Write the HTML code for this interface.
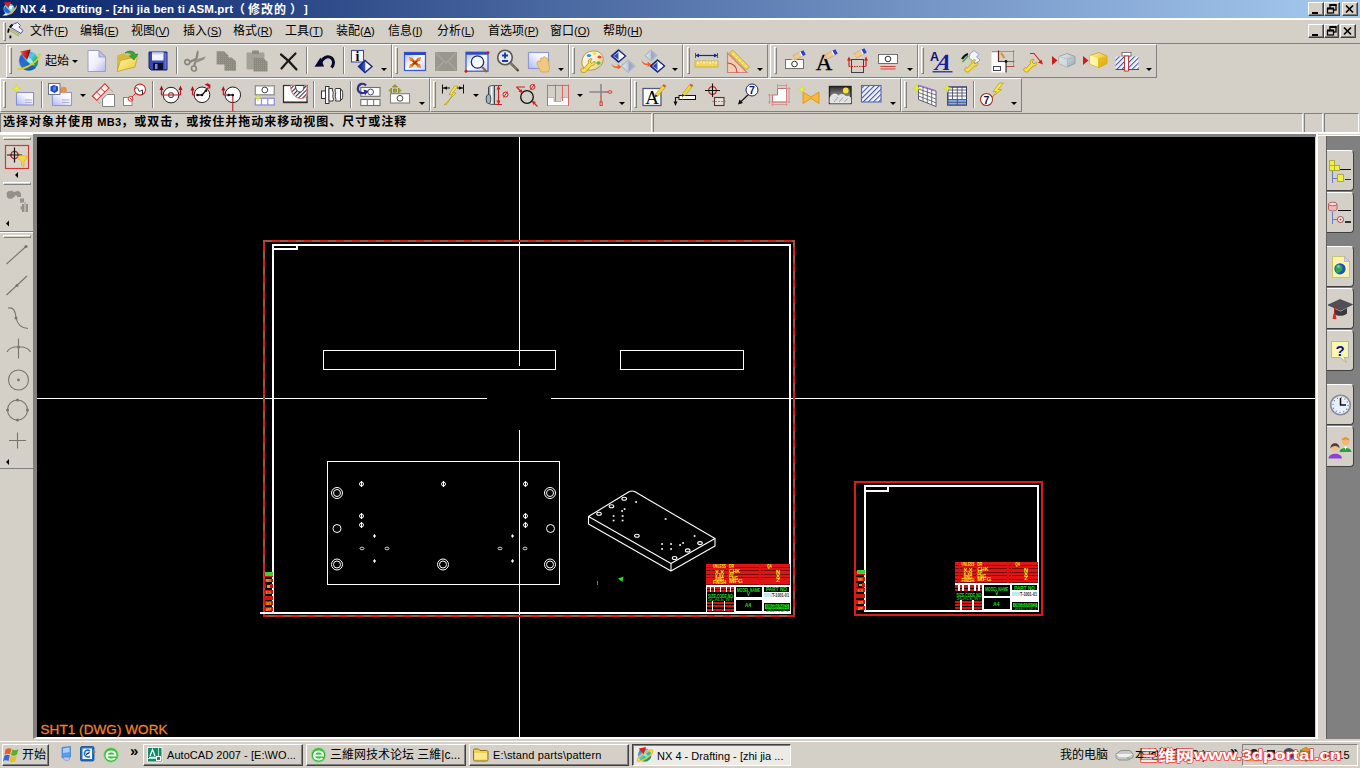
<!DOCTYPE html>
<html lang="zh-CN">
<head>
<meta charset="utf-8">
<title>NX 4 - Drafting - [zhi jia ben ti ASM.prt ( 修改的 ) ]</title>
<style>
*{box-sizing:border-box;margin:0;padding:0}
html,body{width:1360px;height:768px;overflow:hidden;background:#d4d0c8}
body{position:relative;font-family:"Liberation Sans","Noto Sans CJK SC",sans-serif;font-size:12px;color:#000}
.abs{position:absolute}
.t{position:absolute;white-space:nowrap;line-height:1}
svg{position:absolute;overflow:visible}
.tb{position:absolute;border-top:1px solid #fff;border-left:1px solid #fff;border-right:1px solid #808080;border-bottom:1px solid #808080}
.grip{position:absolute;width:3px;border-left:1px solid #fff;border-top:1px solid #fff;border-right:1px solid #808080;border-bottom:1px solid #808080}
.vsep{position:absolute;width:2px;border-left:1px solid #808080;border-right:1px solid #fff}
.dd{position:absolute;width:0;height:0;border-left:3px solid transparent;border-right:3px solid transparent;border-top:3px solid #000}
.wbtn{position:absolute;width:16px;height:14px;background:#d4d0c8;border-top:1px solid #fff;border-left:1px solid #fff;border-right:1px solid #404040;border-bottom:1px solid #404040;box-shadow:inset -1px -1px 0 #808080}
.task{position:absolute;height:22px;top:744px;background:#d4d0c8;border-top:1px solid #fff;border-left:1px solid #fff;border-right:1px solid #404040;border-bottom:1px solid #404040;box-shadow:inset -1px -1px 0 #808080}
</style>
</head>
<body>
<!-- title bar -->
<div class="abs" id="titlebar" style="left:0;top:0;width:1360px;height:18px;background:linear-gradient(90deg,#0a246a 0%,#a6caf0 100%)"></div>
<div class="abs" style="left:0;top:18px;width:1360px;height:2px;background:#fff"></div>
<div id="title" style="font-weight:bold;color:#fff">
<div class="t" id="tt1" style="left:20px;top:4px;font-size:11.500px;letter-spacing:0.160px">NX 4 - Drafting - [zhi jia ben ti ASM.prt</div>
<div class="t" id="tt2" style="left:233px;top:4px;font-size:12px">（</div>
<div class="t" id="tt3" style="left:248px;top:4px;font-size:12px;letter-spacing:1px">修改的</div>
<div class="t" id="tt4" style="left:290px;top:4px;font-size:12px">）</div>
<div class="t" id="tt5" style="left:304px;top:4px;font-size:11px">]</div>
</div>
<!-- window buttons -->
<div class="wbtn" style="left:1308px;top:2px"></div>
<div class="wbtn" style="left:1324px;top:2px"></div>
<div class="wbtn" style="left:1342px;top:2px"></div>
<div class="wbtn" style="left:1308px;top:24px"></div>
<div class="wbtn" style="left:1324px;top:24px;width:15px"></div>
<div class="wbtn" style="left:1340px;top:24px"></div>
<svg style="left:1308px;top:2px" width="50" height="14" viewBox="0 0 50 14">
 <rect x="4" y="10" width="6" height="2" fill="#000"/>
 <rect x="22" y="3" width="6" height="5" fill="none" stroke="#000" stroke-width="1.300"/><rect x="21.500" y="2" width="7" height="2" fill="#000"/>
 <rect x="19.500" y="6.500" width="6" height="4.500" fill="#d4d0c8" stroke="#000" stroke-width="1.300"/><rect x="19" y="5.500" width="7" height="2" fill="#000"/>
 <path d="M38 3.500 L45 10.500 M45 3.500 L38 10.500" stroke="#000" stroke-width="1.700"/>
</svg>
<svg style="left:1308px;top:24px" width="50" height="14" viewBox="0 0 50 14">
 <rect x="4" y="10" width="6" height="2" fill="#000"/>
 <rect x="22" y="3" width="6" height="5" fill="none" stroke="#000" stroke-width="1.300"/><rect x="21.500" y="2" width="7" height="2" fill="#000"/>
 <rect x="19.500" y="6.500" width="6" height="4.500" fill="#d4d0c8" stroke="#000" stroke-width="1.300"/><rect x="19" y="5.500" width="7" height="2" fill="#000"/>
 <path d="M36 3.500 L43 10.500 M43 3.500 L36 10.500" stroke="#000" stroke-width="1.700"/>
</svg>
<!-- menu bar -->
<div class="abs" style="left:0;top:43px;width:1360px;height:1px;background:#808080"></div>
<div class="grip" style="left:3px;top:22px;height:19px"></div>
<div id="menu" style="font-size:12px">
<div class="t" style="left:30px;top:25px">文件<span style="font-size:11px">(<u>F</u>)</span></div>
<div class="t" style="left:80px;top:25px">编辑<span style="font-size:11px">(<u>E</u>)</span></div>
<div class="t" style="left:131px;top:25px">视图<span style="font-size:11px">(<u>V</u>)</span></div>
<div class="t" style="left:183px;top:25px">插入<span style="font-size:11px">(<u>S</u>)</span></div>
<div class="t" style="left:233px;top:25px">格式<span style="font-size:11px">(<u>R</u>)</span></div>
<div class="t" style="left:285px;top:25px">工具<span style="font-size:11px">(<u>T</u>)</span></div>
<div class="t" style="left:336px;top:25px">装配<span style="font-size:11px">(<u>A</u>)</span></div>
<div class="t" style="left:388px;top:25px">信息<span style="font-size:11px">(<u>I</u>)</span></div>
<div class="t" style="left:437px;top:25px">分析<span style="font-size:11px">(<u>L</u>)</span></div>
<div class="t" style="left:488px;top:25px">首选项<span style="font-size:11px">(<u>P</u>)</span></div>
<div class="t" style="left:550px;top:25px">窗口<span style="font-size:11px">(<u>O</u>)</span></div>
<div class="t" style="left:603px;top:25px">帮助<span style="font-size:11px">(<u>H</u>)</span></div>
</div>
<!-- toolbar frames row 1 -->
<div class="tb" style="left:6px;top:44px;width:386px;height:34px"></div>
<div class="tb" style="left:392px;top:44px;width:177px;height:34px"></div>
<div class="tb" style="left:569px;top:44px;width:114px;height:34px"></div>
<div class="tb" style="left:683px;top:44px;width:85px;height:34px"></div>
<div class="tb" style="left:770px;top:44px;width:148px;height:34px"></div>
<div class="tb" style="left:918px;top:44px;width:239px;height:34px"></div>
<!-- toolbar frames row 2 -->
<div class="tb" style="left:0px;top:78px;width:430px;height:34px"></div>
<div class="tb" style="left:430px;top:78px;width:201px;height:34px"></div>
<div class="tb" style="left:631px;top:78px;width:270px;height:34px"></div>
<div class="tb" style="left:901px;top:78px;width:121px;height:34px"></div>
<!-- grips -->
<div class="grip" style="left:9px;top:47px;height:27px"></div>
<div class="grip" style="left:395px;top:47px;height:27px"></div>
<div class="grip" style="left:572px;top:47px;height:27px"></div>
<div class="grip" style="left:687px;top:47px;height:27px"></div>
<div class="grip" style="left:774px;top:47px;height:27px"></div>
<div class="grip" style="left:921px;top:47px;height:27px"></div>
<div class="grip" style="left:3px;top:81px;height:27px"></div>
<div class="grip" style="left:433px;top:81px;height:27px"></div>
<div class="grip" style="left:634px;top:81px;height:27px"></div>
<div class="grip" style="left:904px;top:81px;height:27px"></div>
<!-- separators -->
<div class="vsep" style="left:176px;top:47px;height:27px"></div>
<div class="vsep" style="left:306px;top:47px;height:27px"></div>
<div class="vsep" style="left:343px;top:47px;height:27px"></div>
<div class="vsep" style="left:41px;top:81px;height:27px"></div>
<div class="vsep" style="left:152px;top:81px;height:27px"></div>
<div class="vsep" style="left:313px;top:81px;height:27px"></div>
<div class="vsep" style="left:350px;top:81px;height:27px"></div>
<div class="vsep" style="left:973px;top:81px;height:27px"></div>
<!-- dropdown arrows -->
<div class="dd" style="left:72px;top:60px"></div>
<div class="dd" style="left:381px;top:68px"></div>
<div class="dd" style="left:558px;top:68px"></div>
<div class="dd" style="left:672px;top:68px"></div>
<div class="dd" style="left:757px;top:68px"></div>
<div class="dd" style="left:907px;top:68px"></div>
<div class="dd" style="left:1146px;top:68px"></div>
<div class="dd" style="left:80px;top:94px"></div>
<div class="dd" style="left:419px;top:102px"></div>
<div class="dd" style="left:473px;top:94px"></div>
<div class="dd" style="left:577px;top:94px"></div>
<div class="dd" style="left:619px;top:102px"></div>
<div class="dd" style="left:890px;top:102px"></div>
<div class="dd" style="left:1011px;top:102px"></div>
<div class="t" style="left:45px;top:55px;font-size:12px">起始</div>
<!-- status line -->
<div class="abs" style="left:0;top:113px;width:652px;height:19px;border-top:1px solid #808080;border-left:1px solid #808080;border-right:1px solid #fff"></div>
<div class="abs" style="left:653px;top:113px;width:650px;height:19px;border-top:1px solid #808080;border-left:1px solid #808080;border-right:1px solid #fff"></div>
<div class="abs" style="left:1304px;top:113px;width:19px;height:19px;border-top:1px solid #808080;border-left:1px solid #808080;border-right:1px solid #fff"></div>
<div class="abs" style="left:1324px;top:113px;width:35px;height:19px;border-top:1px solid #808080;border-left:1px solid #808080;border-right:1px solid #fff"></div>
<div class="abs" style="left:0;top:132px;width:1360px;height:2px;background:#fff"></div>
<div class="t" id="statustext" style="left:3px;top:116px;font-size:12px;font-weight:bold;letter-spacing:1px">选择对象并使用<span style="font-size:11px;letter-spacing:0.250px"> MB3</span>，或双击，或按住并拖动来移动视图、尺寸或注释</div>
<!-- canvas -->
<div class="abs" id="canvas" style="left:33px;top:134px;width:1286px;height:605px;background:#000;border-left:4px solid #808080;border-top:3px solid #808080;border-right:4px solid #d4d0c8;border-bottom:2px solid #fff"></div>
<!-- title & menu icons -->
<svg style="left:1px;top:1px" width="18" height="16" viewBox="0 0 18 16">
 <circle cx="8" cy="8" r="5.500" fill="#58d8f0"/><path d="M4 5C6 7 8 10 11 12C8 13.500 4 12 3 9Z" fill="#3060d8"/><path d="M6 5L10 9L12 5Z" fill="#e8ffff"/>
 <path d="M1.500 14.500C6 13.500 13 10 15.500 4C17 6 14 11.500 6 14.500Z" fill="#f0b040"/><path d="M1.500 14.500L5 12L6.500 14Z" fill="#f8f0e0"/>
 <path d="M2.500 1.500L10 1L7.500 7Z" fill="#e01828"/>
</svg>
<svg style="left:7px;top:21px" width="19" height="20" viewBox="0 0 19 20">
 <path d="M6.500 3L10.500 1.500L13.500 4.500L12 6L16 9.500L14 12.500L4 6.500Z" fill="#f4f4ff" stroke="#5058c0" stroke-width="1"/>
 <path d="M2.500 7.500L13 13.500M2 9L12 15" stroke="#a8b860" stroke-width="1.100"/>
 <path d="M5.500 3.500C2 6 0.500 10 1.500 13" fill="none" stroke="#000" stroke-width="1.800" stroke-dasharray="4 1.500"/><rect x="2.500" y="14.500" width="1.800" height="2.800" fill="#000"/>
</svg>
<!-- left sidebar -->
<div class="abs" style="left:0;top:134px;width:33px;height:1px;background:#fff"></div>
<div class="abs" style="left:3px;top:137px;width:28px;height:3px;border-top:1px solid #fff;border-left:1px solid #fff;border-right:1px solid #808080;border-bottom:1px solid #808080"></div>
<div class="abs" style="left:3px;top:182px;width:28px;height:3px;border-top:1px solid #fff;border-left:1px solid #fff;border-right:1px solid #808080;border-bottom:1px solid #808080"></div>
<div class="abs" style="left:0;top:231px;width:33px;height:2px;border-top:1px solid #808080;border-bottom:1px solid #fff"></div>
<div class="abs" style="left:3px;top:235px;width:28px;height:3px;border-top:1px solid #fff;border-left:1px solid #fff;border-right:1px solid #808080;border-bottom:1px solid #808080"></div>
<div class="abs" style="left:0;top:468px;width:33px;height:1px;background:#808080"></div>
<svg id="leftbar" style="left:0;top:134px" width="34" height="340" viewBox="0 134 34 340">
 <!-- selection filter button -->
 <rect x="5.500" y="145.500" width="23" height="23" fill="#d8d4cc" stroke="#d03838" stroke-width="1.200"/>
 <circle cx="14.500" cy="155" r="3.600" fill="none" stroke="#c81818" stroke-width="1.400"/>
 <path d="M14.500 147.500V162.500M7 155H22" stroke="#101010" stroke-width="1.200"/>
 <path d="M17.500 156.500C20 155 25 155 27.500 156.500L24 161.500V166.500L21.500 165.500V161.500Z" fill="#f8d838" stroke="#d8a818" stroke-width="0.600"/>
 <path d="M15 175l3-3v6z" fill="#000"/>
 <!-- binoculars gray -->
 <g fill="#94918a">
  <path d="M6.500 193C8 190.500 12 190 14 192L17 191C19 190.500 21 192 21 194V197H17.500L16 195L13 198C11 199.500 8 199 7 197Z"/>
  <rect x="20" y="198.500" width="4" height="4"/>
  <rect x="22" y="204" width="6" height="8"/><rect x="20.500" y="206.500" width="1.500" height="3"/>
 </g>
 <rect x="24" y="202" width="2" height="10" fill="#b8b5ac"/>
 <path d="M6 223.500l3-3v6z" fill="#000"/>
 <!-- line icons -->
 <g fill="none" stroke="#7c746c" stroke-width="1.100">
  <path d="M6.500 264L26 246.500"/>
  <path d="M6.500 295L27 276"/>
  <path d="M8 308C14 307 15 311 16 317C17 324 21 328 28 328.500"/>
  <path d="M18.500 338.500V358.500M7 352C10 345 27 345 30.500 352"/>
  <circle cx="18.500" cy="380" r="10"/>
  <circle cx="17.500" cy="410" r="10"/>
  <path d="M17.500 432.500V448.500M9 440.500H26"/>
 </g>
 <g fill="#7c746c">
  <circle cx="26" cy="246.500" r="1.600"/><circle cx="17" cy="285.500" r="1.500"/><circle cx="16" cy="318" r="1.500"/><circle cx="18.500" cy="347" r="1.500"/>
  <circle cx="18.500" cy="380" r="1.400"/>
  <circle cx="17.500" cy="400" r="1.500"/><circle cx="17.500" cy="420" r="1.500"/><circle cx="7.500" cy="410" r="1.500"/><circle cx="27.500" cy="410" r="1.500"/>
 </g>
 <path d="M6 462l3-3v6z" fill="#000"/>
</svg>
<!-- right sidebar -->
<div class="abs" style="left:1318px;top:135px;width:42px;height:1px;background:#fff"></div>
<div class="abs" style="left:1326px;top:136px;width:34px;height:603px;background:#808080;border-left:1px solid #606060"></div>
<div class="abs" style="left:1316px;top:134px;width:2px;height:605px;background:#fff"></div>
<!-- taskbar -->
<div class="abs" style="left:0;top:739px;width:1360px;height:29px;background:#d4d0c8"></div>
<div class="abs" style="left:0;top:741px;width:1360px;height:1px;background:#fff"></div>
<!-- right resource bar tabs -->
<div class="abs" style="left:1327px;top:150px;width:27px;height:41px;background:#d4d0c8;border-top:1px solid #fff;border-right:1px solid #404040;border-bottom:1px solid #404040;border-radius:0 4px 4px 0"></div>
<div class="abs" style="left:1327px;top:192px;width:27px;height:41px;background:#d4d0c8;border-top:1px solid #fff;border-right:1px solid #404040;border-bottom:1px solid #404040;border-radius:0 4px 4px 0"></div>
<div class="abs" style="left:1327px;top:246px;width:27px;height:41px;background:#d4d0c8;border-top:1px solid #fff;border-right:1px solid #404040;border-bottom:1px solid #404040;border-radius:0 4px 4px 0"></div>
<div class="abs" style="left:1327px;top:288px;width:27px;height:41px;background:#d4d0c8;border-top:1px solid #fff;border-right:1px solid #404040;border-bottom:1px solid #404040;border-radius:0 4px 4px 0"></div>
<div class="abs" style="left:1327px;top:330px;width:27px;height:41px;background:#d4d0c8;border-top:1px solid #fff;border-right:1px solid #404040;border-bottom:1px solid #404040;border-radius:0 4px 4px 0"></div>
<div class="abs" style="left:1327px;top:384px;width:27px;height:41px;background:#d4d0c8;border-top:1px solid #fff;border-right:1px solid #404040;border-bottom:1px solid #404040;border-radius:0 4px 4px 0"></div>
<div class="abs" style="left:1327px;top:426px;width:27px;height:41px;background:#d4d0c8;border-top:1px solid #fff;border-right:1px solid #404040;border-bottom:1px solid #404040;border-radius:0 4px 4px 0"></div>
<svg id="rtabs" style="left:1320px;top:140px" width="40" height="340" viewBox="1320 140 40 340">
<g shape-rendering="crispEdges"><rect x="1329" y="160" width="5" height="5" fill="#f0f040" stroke="#a0a020" stroke-width="0.800"/><rect x="1329" y="165" width="5" height="5" fill="#f0f040" stroke="#a0a020" stroke-width="0.800"/><rect x="1334" y="165" width="5" height="5" fill="#f0f040" stroke="#a0a020" stroke-width="0.800"/>
<rect x="1339.500" y="168.500" width="11.500" height="1.500" fill="#101010"/>
<rect x="1331.500" y="171" width="1.500" height="12" fill="#7078c0"/><rect x="1333" y="177.500" width="4" height="1.300" fill="#7078c0"/>
<rect x="1337.500" y="174.500" width="6" height="6.500" fill="#f0f040" stroke="#a0a020" stroke-width="0.800"/>
<rect x="1345" y="178.500" width="6" height="1.500" fill="#303030"/></g>
<path d="M1328.500 204V209C1328.500 211.500 1337 211.500 1337 209V204Z" fill="#f0b8b8" stroke="#a05050" stroke-width="0.800"/><ellipse cx="1332.750" cy="204" rx="4.250" ry="1.800" fill="#f8d8d8" stroke="#a05050" stroke-width="0.800"/>
<g shape-rendering="crispEdges"><rect x="1337.500" y="209.500" width="13.500" height="1.500" fill="#101010"/>
<rect x="1331.500" y="212" width="1.500" height="12" fill="#7078c0"/><rect x="1333" y="219" width="4" height="1.300" fill="#7078c0"/>
<rect x="1345" y="221" width="6" height="1.500" fill="#303030"/></g>
<circle cx="1340.500" cy="219.500" r="3" fill="#fff" stroke="#b03030" stroke-width="1"/><circle cx="1340.500" cy="219.500" r="1" fill="#b03030"/>
<path d="M1332.500 256.500H1344.500L1349.500 261.500V277.500H1332.500Z" fill="#f8f4b0" stroke="#c8c068" stroke-width="0.900"/><path d="M1344.500 256.500V261.500H1349.500Z" fill="#d0d0f0" stroke="#a8a8c8" stroke-width="0.700"/>
<circle cx="1340" cy="268.800" r="5.600" fill="#2050c0"/><path d="M1336.500 265C1339 263.500 1342 265 1342.500 267.500C1343 270 1340 272.500 1337.500 273.500C1335 271.500 1335 267 1336.500 265Z" fill="#30a850"/><circle cx="1338.500" cy="266.500" r="1.500" fill="#90d8f0" opacity="0.700"/>
<path d="M1328 305L1340 299.500L1352.500 304.500L1340.500 310.500Z" fill="#505058" stroke="#303038" stroke-width="0.600"/>
<path d="M1334 308.500V314C1337 316.500 1344 316.500 1347 313.500V308L1340.500 311.500Z" fill="#38383e"/>
<path d="M1340 305L1334.500 308V315" fill="none" stroke="#c02020" stroke-width="1"/><path d="M1333.500 313.500L1332.500 319H1336.500L1335.500 313.500Z" fill="#e02828"/>
<path d="M1331.500 341.500H1348.500V357.500H1344L1346.500 362.500L1340 357.500H1331.500Z" fill="#f8f8b0" stroke="#a8b0a0" stroke-width="0.900"/>
<text x="1340" y="355.500" font-family="Liberation Sans,sans-serif" font-weight="bold" font-size="15" text-anchor="middle" fill="#101088">?</text>
<circle cx="1340.500" cy="405" r="9.800" fill="#e8f0fc" stroke="#888c94" stroke-width="1.600"/><circle cx="1340.500" cy="405" r="7.500" fill="none" stroke="#5068a0" stroke-width="1.200" stroke-dasharray="1 2.930"/>
<path d="M1340.500 398V405H1346" fill="none" stroke="#101010" stroke-width="1.500"/>
<path d="M1339.500 452C1339.500 446.500 1351.500 446.500 1351.500 452Z" fill="#28a038"/><path d="M1344 446.500L1345.500 450L1347 446.500Z" fill="#fff"/>
<circle cx="1345.500" cy="441.500" r="3.700" fill="#f0b878"/><path d="M1341.500 441C1341.500 436 1349.500 436 1349.500 441C1348 439 1343 439 1341.500 441Z" fill="#e89028"/>
<path d="M1328.500 458.500C1328.500 452 1342 452 1342 458.500Z" fill="#9040d0"/>
<circle cx="1335" cy="447.500" r="4" fill="#f0c090"/><path d="M1330.500 448.500C1330 441.500 1340 441.500 1339.500 448.500C1338 445 1332 445 1330.500 448.500Z" fill="#504038"/>
</svg>
<!-- drawing canvas -->
<svg id="drawing" style="left:0;top:0" width="1360" height="768" viewBox="0 0 1360 768">
<g shape-rendering="crispEdges" fill="none">
<path d="M519.5 137V366M519.5 430V737M37 398.500H487M551 398.500H1315" stroke="#fff" stroke-width="1"/>
<rect x="264" y="241" width="530" height="375" stroke="#d81c1c" stroke-width="2"/>
<rect x="264" y="241" width="530" height="375" stroke="#a85040" stroke-width="2" stroke-dasharray="8 8"/>
<rect x="273" y="245" width="517" height="368" stroke="#fff" stroke-width="2"/>
<path d="M273 249H297V245" stroke="#fff" stroke-width="2"/>
<rect x="855" y="482" width="187" height="133" stroke="#d81c1c" stroke-width="2"/>
<rect x="865" y="486" width="173" height="125" stroke="#fff" stroke-width="2"/>
<path d="M865 491H888V486" stroke="#fff" stroke-width="2"/>
<path d="M260 612.500H273" stroke="#fff" stroke-width="2"/>
<rect x="323.500" y="350.500" width="232" height="19" stroke="#fff"/>
<rect x="620.500" y="350.500" width="123" height="19" stroke="#fff"/>
<rect x="327.500" y="461.500" width="232" height="123" stroke="#fff"/>
</g>
<g fill="none" stroke="#fff" stroke-width="1">
<circle cx="337" cy="493" r="5.500"/><circle cx="337" cy="493" r="3.500"/>
<circle cx="550" cy="493" r="5.500"/><circle cx="550" cy="493" r="3.500"/>
<circle cx="337" cy="564.5" r="5.500"/><circle cx="337" cy="564.5" r="3.500"/>
<circle cx="443" cy="564.5" r="5.500"/><circle cx="443" cy="564.5" r="3.500"/>
<circle cx="550" cy="564.5" r="5.500"/><circle cx="550" cy="564.5" r="3.500"/>
<circle cx="337" cy="528.5" r="4"/>
<circle cx="550.5" cy="528.5" r="4"/>
<circle cx="361.5" cy="484" r="2"/><path d="M361.5 481V487"/>
<circle cx="443.5" cy="484" r="2"/><path d="M443.5 481V487"/>
<circle cx="525.5" cy="484" r="2"/><path d="M525.5 481V487"/>
<circle cx="361.5" cy="516" r="2"/><path d="M361.5 513V519"/>
<circle cx="361.5" cy="525" r="2"/><path d="M361.5 522V528"/>
<circle cx="525.5" cy="516" r="2"/><path d="M525.5 513V519"/>
<circle cx="525.5" cy="525" r="2"/><path d="M525.5 522V528"/>
</g><g fill="#fff">
<path d="M373.0 536L374.5 534L376.0 536L374.5 538Z"/>
<path d="M373.0 561L374.5 559L376.0 561L374.5 563Z"/>
<path d="M511.0 536L512.5 534L514.0 536L512.5 538Z"/>
<path d="M511.0 561L512.5 559L514.0 561L512.5 563Z"/>
<ellipse cx="362" cy="548.5" rx="2" ry="1.300" fill="none" stroke="#fff" stroke-width="0.800"/>
<ellipse cx="387" cy="548.5" rx="2" ry="1.300" fill="none" stroke="#fff" stroke-width="0.800"/>
<ellipse cx="500" cy="548.5" rx="2" ry="1.300" fill="none" stroke="#fff" stroke-width="0.800"/>
<ellipse cx="525" cy="548.5" rx="2" ry="1.300" fill="none" stroke="#fff" stroke-width="0.800"/>
</g>
<g fill="none" stroke="#fff" stroke-width="1.100" stroke-linejoin="round">
<path d="M588.5 516.5L629 491.8Q632 490.2 635 491.8L715 538.5L671 563.5Z"/>
<path d="M588.5 516.5V524.0L671 571.0L715 546.0V538.5M671 563.5V571.0"/>
<ellipse cx="624.2" cy="498.8" rx="2.300" ry="1.500"/>
<ellipse cx="611.5" cy="506.2" rx="2.300" ry="1.500"/>
<ellipse cx="599" cy="513.8" rx="2.300" ry="1.500"/>
<ellipse cx="636.9" cy="535.8" rx="2.300" ry="1.500"/>
<ellipse cx="700" cy="543.1" rx="2.300" ry="1.500"/>
<ellipse cx="687.7" cy="550.4" rx="2.300" ry="1.500"/>
<ellipse cx="674.6" cy="558" rx="2.300" ry="1.500"/>
</g><g fill="#fff">
<rect x="635.2" y="501.2" width="1.800" height="1.600"/>
<rect x="623.7" y="508.2" width="1.800" height="1.600"/>
<rect x="621.2" y="510.2" width="1.800" height="1.600"/>
<rect x="612.7" y="515.2" width="1.800" height="1.600"/>
<rect x="621.7" y="515.2" width="1.800" height="1.600"/>
<rect x="612.7" y="519.7" width="1.800" height="1.600"/>
<rect x="621.7" y="519.7" width="1.800" height="1.600"/>
<rect x="664.7" y="518.2" width="1.800" height="1.600"/>
<rect x="693.7" y="535.2" width="1.800" height="1.600"/>
<rect x="682.2" y="542.2" width="1.800" height="1.600"/>
<rect x="679.2" y="544.2" width="1.800" height="1.600"/>
<rect x="661.2" y="543.2" width="1.800" height="1.600"/>
<rect x="670.2" y="543.2" width="1.800" height="1.600"/>
<rect x="661.2" y="548.2" width="1.800" height="1.600"/>
<rect x="670.2" y="548.2" width="1.800" height="1.600"/>
</g>
<path d="M618 578.500L623.500 576.500L622.500 582Z" fill="#22e022"/><rect x="597" y="581" width="1" height="4" fill="#22c022"/>
<g shape-rendering="crispEdges">
<rect x="706.0" y="564.0" width="84" height="20.5" fill="#7a0c0c"/>
<rect x="706.0" y="564.3" width="84" height="2.6" fill="#e01414"/>
<rect x="706.0" y="567.7" width="84" height="2.6" fill="#e01414"/>
<rect x="706.0" y="571.1" width="84" height="2.6" fill="#e01414"/>
<rect x="706.0" y="574.5" width="84" height="2.6" fill="#e01414"/>
<rect x="706.0" y="577.9" width="84" height="2.6" fill="#e01414"/>
<rect x="706.0" y="581.3" width="84" height="2.6" fill="#e01414"/>
<rect x="710.5" y="564.0" width="1.5" height="20.5" fill="#e01010"/>
<rect x="727.5" y="564.0" width="1.5" height="20.5" fill="#e01010"/>
<rect x="759.0" y="564.0" width="1.5" height="20.5" fill="#e01010"/>
<rect x="762.5" y="564.0" width="1.5" height="20.5" fill="#e01010"/>
<rect x="706.0" y="584.5" width="84" height="28.0" fill="#fff"/>
<rect x="707.0" y="586.5" width="27.0" height="25.0" fill="#000"/>
<rect x="707.0" y="587.0" width="27.0" height="2.0" fill="#d81010"/>
<rect x="707.0" y="590.0" width="27.0" height="2.0" fill="#d81010"/>
<rect x="707.0" y="602.0" width="27.0" height="2.0" fill="#d81010"/>
<rect x="707.0" y="605.0" width="27.0" height="2.0" fill="#d81010"/>
<rect x="707.0" y="608.5" width="27.0" height="2.0" fill="#d81010"/>
<rect x="710.0" y="587.0" width="1.2" height="5.0" fill="#fff"/>
<rect x="714.0" y="587.0" width="1.2" height="5.0" fill="#fff"/>
<rect x="720.0" y="587.0" width="1.2" height="5.0" fill="#fff"/>
<rect x="726.0" y="587.0" width="1.2" height="5.0" fill="#fff"/>
<rect x="730.0" y="587.0" width="1.2" height="5.0" fill="#fff"/>
<rect x="712.0" y="601.0" width="1.2" height="10.0" fill="#fff"/>
<rect x="724.0" y="601.0" width="1.2" height="10.0" fill="#fff"/>
<rect x="736.0" y="586.5" width="25.5" height="10.5" fill="#000"/>
<rect x="736.0" y="599.5" width="25.5" height="11.0" fill="#000"/>
<rect x="764.0" y="587.0" width="25.0" height="4.5" fill="#000"/>
<rect x="763.5" y="593.0" width="8.0" height="4.0" fill="#bfe8ff"/>
<rect x="763.5" y="603.0" width="26.0" height="8.0" fill="#000"/>
<rect x="765.0" y="604.0" width="24.0" height="4.5" fill="#18d818"/>
</g>
<g font-family="Liberation Sans,sans-serif" font-weight="bold" fill="#ffe820" font-size="5.5">
<text x="713.0" y="568.0" textLength="13.0" lengthAdjust="spacingAndGlyphs">UNLESS</text>
<text x="715.0" y="573.5" textLength="9.0" lengthAdjust="spacingAndGlyphs">X.X</text>
<text x="715.0" y="577.5" textLength="9.0" lengthAdjust="spacingAndGlyphs">X.XX</text>
<text x="715.0" y="581.0" textLength="9.0" lengthAdjust="spacingAndGlyphs">ANG</text>
<text x="713.0" y="584.0" textLength="13.0" lengthAdjust="spacingAndGlyphs">FINISH</text>
<text x="729.0" y="568.0" textLength="5.0" lengthAdjust="spacingAndGlyphs">DR</text>
<text x="729.0" y="572.5" textLength="11.0" lengthAdjust="spacingAndGlyphs">CHK</text>
<text x="729.0" y="576.0" textLength="5.0" lengthAdjust="spacingAndGlyphs">AP</text>
<text x="729.0" y="579.5" textLength="9.0" lengthAdjust="spacingAndGlyphs">ENG</text>
<text x="729.0" y="583.0" textLength="14.0" lengthAdjust="spacingAndGlyphs">MFG</text>
<text x="767.0" y="568.0" textLength="5.0" lengthAdjust="spacingAndGlyphs">QA</text>
<text x="776.0" y="574.0" textLength="4.0" lengthAdjust="spacingAndGlyphs">N</text>
<text x="776.0" y="578.0" textLength="4.0" lengthAdjust="spacingAndGlyphs">X</text>
<text x="776.0" y="582.0" textLength="4.0" lengthAdjust="spacingAndGlyphs">Z</text>
</g>
<g font-family="Liberation Sans,sans-serif" font-weight="bold" fill="#20e020" font-size="5.5">
<text x="737.0" y="592.0" textLength="23.0" lengthAdjust="spacingAndGlyphs">MODEL NAME</text>
<text x="747.0" y="596.0" textLength="3.0" lengthAdjust="spacingAndGlyphs">V</text>
<text x="745.0" y="607.0" textLength="6.0" lengthAdjust="spacingAndGlyphs">A4</text>
<text x="766.0" y="591.0" textLength="21.0" lengthAdjust="spacingAndGlyphs">PART NO</text>
<text x="708.0" y="598.0" textLength="25.0" lengthAdjust="spacingAndGlyphs">SIZE CODE NO</text>
<text x="708.0" y="601.0" textLength="25.0" lengthAdjust="spacingAndGlyphs" fill="#10a010">SCALE WT</text>
<text x="766.0" y="608.0" textLength="22.0" lengthAdjust="spacingAndGlyphs" fill="#063806">UNIGRAPHICS</text>
<text x="766.0" y="611.5" textLength="22.0" lengthAdjust="spacingAndGlyphs" fill="#10a010">SHEET 1 OF 1</text>
<text x="772.0" y="597.0" textLength="17.0" lengthAdjust="spacingAndGlyphs" fill="#222">T-1001-01</text>
</g>
<g shape-rendering="crispEdges">
<rect x="954.5" y="562.0" width="83.5" height="20.92" fill="#7a0c0c"/>
<rect x="954.5" y="562.31" width="83.5" height="2.65" fill="#e01414"/>
<rect x="954.5" y="565.78" width="83.5" height="2.65" fill="#e01414"/>
<rect x="954.5" y="569.25" width="83.5" height="2.65" fill="#e01414"/>
<rect x="954.5" y="572.72" width="83.5" height="2.65" fill="#e01414"/>
<rect x="954.5" y="576.19" width="83.5" height="2.65" fill="#e01414"/>
<rect x="954.5" y="579.66" width="83.5" height="2.65" fill="#e01414"/>
<rect x="958.97" y="562.0" width="1.49" height="20.92" fill="#e01010"/>
<rect x="975.87" y="562.0" width="1.49" height="20.92" fill="#e01010"/>
<rect x="1007.18" y="562.0" width="1.49" height="20.92" fill="#e01010"/>
<rect x="1010.66" y="562.0" width="1.49" height="20.92" fill="#e01010"/>
<rect x="954.5" y="582.92" width="83.5" height="28.58" fill="#fff"/>
<rect x="955.49" y="584.96" width="26.84" height="25.52" fill="#000"/>
<rect x="955.49" y="585.47" width="26.84" height="2.04" fill="#d81010"/>
<rect x="955.49" y="588.54" width="26.84" height="2.04" fill="#d81010"/>
<rect x="955.49" y="600.78" width="26.84" height="2.04" fill="#d81010"/>
<rect x="955.49" y="603.85" width="26.84" height="2.04" fill="#d81010"/>
<rect x="955.49" y="607.42" width="26.84" height="2.04" fill="#d81010"/>
<rect x="958.48" y="585.47" width="1.19" height="5.1" fill="#fff"/>
<rect x="962.45" y="585.47" width="1.19" height="5.1" fill="#fff"/>
<rect x="968.42" y="585.47" width="1.19" height="5.1" fill="#fff"/>
<rect x="974.38" y="585.47" width="1.19" height="5.1" fill="#fff"/>
<rect x="978.36" y="585.47" width="1.19" height="5.1" fill="#fff"/>
<rect x="960.46" y="599.76" width="1.19" height="10.21" fill="#fff"/>
<rect x="972.39" y="599.76" width="1.19" height="10.21" fill="#fff"/>
<rect x="984.32" y="584.96" width="25.35" height="10.72" fill="#000"/>
<rect x="984.32" y="598.23" width="25.35" height="11.23" fill="#000"/>
<rect x="1012.15" y="585.47" width="24.85" height="4.59" fill="#000"/>
<rect x="1011.66" y="591.6" width="7.95" height="4.08" fill="#bfe8ff"/>
<rect x="1011.66" y="601.8" width="25.85" height="8.16" fill="#000"/>
<rect x="1013.15" y="602.82" width="23.86" height="4.59" fill="#18d818"/>
</g>
<g font-family="Liberation Sans,sans-serif" font-weight="bold" fill="#ffe820" font-size="5.61">
<text x="961.46" y="566.08" textLength="12.92" lengthAdjust="spacingAndGlyphs">UNLESS</text>
<text x="963.45" y="571.7" textLength="8.95" lengthAdjust="spacingAndGlyphs">X.X</text>
<text x="963.45" y="575.78" textLength="8.95" lengthAdjust="spacingAndGlyphs">X.XX</text>
<text x="963.45" y="579.35" textLength="8.95" lengthAdjust="spacingAndGlyphs">ANG</text>
<text x="961.46" y="582.41" textLength="12.92" lengthAdjust="spacingAndGlyphs">FINISH</text>
<text x="977.36" y="566.08" textLength="4.97" lengthAdjust="spacingAndGlyphs">DR</text>
<text x="977.36" y="570.68" textLength="10.93" lengthAdjust="spacingAndGlyphs">CHK</text>
<text x="977.36" y="574.25" textLength="4.97" lengthAdjust="spacingAndGlyphs">AP</text>
<text x="977.36" y="577.82" textLength="8.95" lengthAdjust="spacingAndGlyphs">ENG</text>
<text x="977.36" y="581.39" textLength="13.92" lengthAdjust="spacingAndGlyphs">MFG</text>
<text x="1015.14" y="566.08" textLength="4.97" lengthAdjust="spacingAndGlyphs">QA</text>
<text x="1024.08" y="572.21" textLength="3.98" lengthAdjust="spacingAndGlyphs">N</text>
<text x="1024.08" y="576.29" textLength="3.98" lengthAdjust="spacingAndGlyphs">X</text>
<text x="1024.08" y="580.37" textLength="3.98" lengthAdjust="spacingAndGlyphs">Z</text>
</g>
<g font-family="Liberation Sans,sans-serif" font-weight="bold" fill="#20e020" font-size="5.61">
<text x="985.32" y="590.58" textLength="22.86" lengthAdjust="spacingAndGlyphs">MODEL NAME</text>
<text x="995.26" y="594.66" textLength="2.98" lengthAdjust="spacingAndGlyphs">V</text>
<text x="993.27" y="605.89" textLength="5.96" lengthAdjust="spacingAndGlyphs">A4</text>
<text x="1014.14" y="589.56" textLength="20.88" lengthAdjust="spacingAndGlyphs">PART NO</text>
<text x="956.49" y="596.7" textLength="24.85" lengthAdjust="spacingAndGlyphs">SIZE CODE NO</text>
<text x="956.49" y="599.76" textLength="24.85" lengthAdjust="spacingAndGlyphs" fill="#10a010">SCALE WT</text>
<text x="1014.14" y="606.91" textLength="21.87" lengthAdjust="spacingAndGlyphs" fill="#063806">UNIGRAPHICS</text>
<text x="1014.14" y="610.48" textLength="21.87" lengthAdjust="spacingAndGlyphs" fill="#10a010">SHEET 1 OF 1</text>
<text x="1020.11" y="595.68" textLength="16.9" lengthAdjust="spacingAndGlyphs" fill="#222">T-1001-01</text>
</g>
<g shape-rendering="crispEdges">
<rect x="264" y="572.8" width="9" height="3.91" fill="#d81010"/>
<rect x="264" y="578.51" width="9" height="3.91" fill="#d81010"/>
<rect x="264" y="584.2299999999999" width="9" height="3.91" fill="#d81010"/>
<rect x="264" y="589.9399999999999" width="9" height="3.91" fill="#d81010"/>
<rect x="264" y="595.66" width="9" height="3.91" fill="#d81010"/>
<rect x="264" y="601.37" width="9" height="3.91" fill="#d81010"/>
<rect x="264" y="607.0899999999999" width="9" height="3.91" fill="#d81010"/>
<rect x="265" y="572" width="8" height="3.71" fill="#40d030"/>
<rect x="266" y="584.43" width="4" height="3.71" fill="#101000"/>
<rect x="267" y="585.43" width="3" height="2.21" fill="#c0b020"/>
</g>
<g font-family="Liberation Sans,sans-serif" font-weight="bold" fill="#ffd020" font-size="4.11">
<text x="266" y="582.4" textLength="5" lengthAdjust="spacingAndGlyphs">REV</text>
<text x="266" y="593.83" textLength="5" lengthAdjust="spacingAndGlyphs" fill="#40e030">ECN</text>
<text x="266" y="605.26" textLength="5" lengthAdjust="spacingAndGlyphs">DATE</text>
<text x="266" y="610.97" textLength="5" lengthAdjust="spacingAndGlyphs">APP</text>
</g>
<g shape-rendering="crispEdges">
<rect x="856" y="570.8" width="9" height="4.06" fill="#d81010"/>
<rect x="856" y="576.66" width="9" height="4.06" fill="#d81010"/>
<rect x="856" y="582.51" width="9" height="4.06" fill="#d81010"/>
<rect x="856" y="588.37" width="9" height="4.06" fill="#d81010"/>
<rect x="856" y="594.2299999999999" width="9" height="4.06" fill="#d81010"/>
<rect x="856" y="600.0899999999999" width="9" height="4.06" fill="#d81010"/>
<rect x="856" y="605.9399999999999" width="9" height="4.06" fill="#d81010"/>
<rect x="857" y="570" width="8" height="3.86" fill="#40d030"/>
<rect x="858" y="582.71" width="4" height="3.86" fill="#101000"/>
<rect x="859" y="583.71" width="3" height="2.36" fill="#c0b020"/>
</g>
<g font-family="Liberation Sans,sans-serif" font-weight="bold" fill="#ffd020" font-size="4.22">
<text x="858" y="580.66" textLength="5" lengthAdjust="spacingAndGlyphs">REV</text>
<text x="858" y="592.37" textLength="5" lengthAdjust="spacingAndGlyphs" fill="#40e030">ECN</text>
<text x="858" y="604.09" textLength="5" lengthAdjust="spacingAndGlyphs">DATE</text>
<text x="858" y="609.95" textLength="5" lengthAdjust="spacingAndGlyphs">APP</text>
</g>
<text x="40.500" y="734" font-family="Liberation Sans,sans-serif" font-size="13.500" fill="#f08030" stroke="#f08030" stroke-width="0.300" id="sht" textLength="127" lengthAdjust="spacing">SHT1 (DWG) WORK</text>
</svg>
<!-- shared gradients -->
<svg style="left:0;top:0" width="0" height="0"><defs>
<linearGradient id="gPage" x1="0" y1="0" x2="1" y2="1"><stop offset="0" stop-color="#ffffff"/><stop offset="0.550" stop-color="#eeeefc"/><stop offset="1" stop-color="#b8b8ec"/></linearGradient>
<linearGradient id="gWin" x1="0" y1="0" x2="1" y2="1"><stop offset="0" stop-color="#a8b8f0"/><stop offset="0.500" stop-color="#ffffff"/><stop offset="1" stop-color="#c8d0f8"/></linearGradient>
<linearGradient id="gWin2" x1="0" y1="1" x2="1" y2="0"><stop offset="0" stop-color="#b0b8f0"/><stop offset="0.600" stop-color="#f4f4ff"/><stop offset="1" stop-color="#ffffff"/></linearGradient>
<linearGradient id="gFolder" x1="0" y1="0" x2="1" y2="1"><stop offset="0" stop-color="#fff8b0"/><stop offset="1" stop-color="#e8c830"/></linearGradient>
<linearGradient id="gGlobe" x1="0" y1="0" x2="1" y2="1"><stop offset="0" stop-color="#2850d8"/><stop offset="0.450" stop-color="#50d0e8"/><stop offset="0.700" stop-color="#20a860"/><stop offset="1" stop-color="#1060b0"/></linearGradient>
<linearGradient id="gRed" x1="0" y1="0" x2="1" y2="0"><stop offset="0" stop-color="#ff5050"/><stop offset="0.600" stop-color="#d01818"/><stop offset="1" stop-color="#701010"/></linearGradient>
<linearGradient id="gDia" x1="0" y1="0" x2="1" y2="0"><stop offset="0" stop-color="#0a1a80"/><stop offset="0.450" stop-color="#3858c8"/><stop offset="0.550" stop-color="#ffffff"/><stop offset="1" stop-color="#ffffff"/></linearGradient>
<linearGradient id="gDiaG" x1="0" y1="0" x2="1" y2="0"><stop offset="0" stop-color="#e8ecf4"/><stop offset="0.500" stop-color="#c0c8d8"/><stop offset="0.550" stop-color="#98a4bc"/><stop offset="1" stop-color="#b0b8cc"/></linearGradient>
<linearGradient id="gYel" x1="0" y1="0" x2="1" y2="1"><stop offset="0" stop-color="#fff8a0"/><stop offset="1" stop-color="#e0a800"/></linearGradient>
<linearGradient id="gCubeG" x1="0" y1="0" x2="1" y2="1"><stop offset="0" stop-color="#e8f0f4"/><stop offset="1" stop-color="#98a8b0"/></linearGradient>
<linearGradient id="gPal" x1="0" y1="0" x2="1" y2="1"><stop offset="0" stop-color="#fffdf4"/><stop offset="0.600" stop-color="#f8e8c8"/><stop offset="1" stop-color="#e8b060"/></linearGradient>
<linearGradient id="gCyl" x1="0" y1="0" x2="1" y2="0"><stop offset="0" stop-color="#607080"/><stop offset="0.500" stop-color="#ffffff"/><stop offset="1" stop-color="#8090a0"/></linearGradient>
<linearGradient id="gPic" x1="0" y1="0" x2="0" y2="1"><stop offset="0" stop-color="#303030"/><stop offset="1" stop-color="#d0d0d0"/></linearGradient>
<pattern id="hatchB" width="3.600" height="3.600" patternUnits="userSpaceOnUse" patternTransform="rotate(-45)"><rect width="3.600" height="3.600" fill="#f4f6ff"/><rect width="3.600" height="1.100" fill="#4858a8"/></pattern>
<pattern id="hatchK" width="3" height="3" patternUnits="userSpaceOnUse" patternTransform="rotate(-45)"><rect width="3" height="3" fill="#fff"/><rect width="3" height="1.100" fill="#303038"/></pattern>
<pattern id="gridG" width="2" height="2" patternUnits="userSpaceOnUse"><rect width="2" height="2" fill="#8c897f"/><rect width="1" height="1" fill="#9c998f"/></pattern>
</defs></svg>
<!-- toolbar row 1 icons -->
<svg style="left:16px;top:48px" width="26" height="26" viewBox="0 0 26 26"><circle cx="12.500" cy="13" r="9.800" fill="url(#gGlobe)"/>
<path d="M5 7C9 11 13 16 20 20C17 22.500 12 23.500 8 21.500C4 19 2.500 12 5 7Z" fill="#1848c0" opacity="0.700"/>
<path d="M9 9.500C13 8.500 17 11.500 18.500 17C15 17 11 14 9 9.500Z" fill="#a8f4fc" opacity="0.850"/>
<path d="M1.500 21C3 22 9 21 15 17C21 13 25 7.500 24 6C24 10 18 15 13 17.500C8 20 3 21 1.500 21Z" fill="#f8e030" stroke="#e8c820" stroke-width="1.300" stroke-linejoin="round"/>
<path d="M20.500 8C22 6.500 23.500 5.500 24 6" fill="none" stroke="#b0e060" stroke-width="1.200"/>
<path d="M4 3.500L14.500 1.500L11 12Z" fill="url(#gRed)"/>
<path d="M14.500 1.500L11 12L12.500 5Z" fill="#601010"/></svg>
<svg style="left:87px;top:50px" width="20" height="23" viewBox="0 0 20 23"><path d="M1 0.500H12L18.500 7V21.500H1Z" fill="url(#gPage)" stroke="#9c9cc8" stroke-width="1"/>
<path d="M12 0.500V7H18.500Z" fill="#c0c0ec" stroke="#9c9cc8" stroke-width="1"/></svg>
<svg style="left:115px;top:49px" width="25" height="24" viewBox="0 0 25 24"><path d="M2 6.500L9 4L11 6L17 5V9L4 12.500V22.500L2 21Z" fill="#d8b838"/>
<path d="M2 22.500L5.500 11.500L22.500 7.500L20 18Z" fill="url(#gFolder)" stroke="#c8a020" stroke-width="0.800"/>
<path d="M10 4C14 1 19 1.500 20.500 5.500L23 5L19 11L14.500 7L17.500 6.500C16 4 13 3.500 10 4Z" fill="#38a838" stroke="#207020" stroke-width="0.600"/></svg>
<svg style="left:148px;top:51px" width="20" height="20" viewBox="0 0 20 20"><path d="M1 1H19V19H3L1 17Z" fill="#3848b0" stroke="#182070" stroke-width="1"/>
<rect x="4" y="1.500" width="11.500" height="8" fill="#f4f4ff"/>
<rect x="4" y="1.500" width="11.500" height="2" fill="#c8d0f8"/>
<rect x="5" y="12" width="10" height="7" fill="#10102c"/>
<rect x="7" y="13" width="2.500" height="5" fill="#8088d0"/>
<rect x="16.500" y="2" width="2" height="16" fill="#7888e0" opacity="0.700"/></svg>
<svg style="left:183px;top:49px" width="24" height="24" viewBox="0 0 24 24"><g fill="none" stroke="#8a877e" stroke-width="1.700">
<circle cx="4.300" cy="13.100" r="2.500"/><circle cx="10.900" cy="19.500" r="2.500"/></g>
<path d="M6.500 11.800L12.500 9C13 5 13.500 2.500 15.200 1C16 3 15.500 7 14.200 10.500L12 17.500L10 16.500L11.500 12L7 14Z" fill="#8a877e"/>
<path d="M12.500 10.500C16 9.500 19.500 8.500 22.500 7.500C22.500 9.500 20 11.500 16.500 12.500L12 14Z" fill="#94918a"/></svg>
<svg style="left:215px;top:50px" width="23" height="22" viewBox="0 0 23 22"><path d="M1.600 1.300H9L13.500 5.500V14.500H1.600Z" fill="url(#gridG)"/>
<path d="M9.500 7.500H16.500L21 11.500V20.700H9.500Z" fill="url(#gridG)"/></svg>
<svg style="left:245px;top:49px" width="25" height="24" viewBox="0 0 25 24"><rect x="1.500" y="3.500" width="18" height="17" rx="1" fill="#a4a196"/>
<rect x="7" y="1.500" width="7" height="3.500" rx="1" fill="#8c897e"/>
<path d="M8.500 9H18L22.500 13V22.500H8.500Z" fill="url(#gridG)"/></svg>
<svg style="left:279px;top:52px" width="20" height="19" viewBox="0 0 20 19"><path d="M2 2.500C8 7 13 12 17.500 17.500M16.500 1.500C12 6 7 11 2.500 16.500" fill="none" stroke="#1a1a1a" stroke-width="2.200" stroke-linecap="round"/></svg>
<svg style="left:313px;top:52px" width="23" height="18" viewBox="0 0 23 18"><path d="M7.500 11.500C9 6 14.500 3 18.500 6C21.500 8.500 21 12.500 18.500 15.500" fill="none" stroke="#080830" stroke-width="3"/>
<path d="M1.500 14.800L7.500 5.500L11 14.500Z" fill="#080830"/></svg>
<svg style="left:350px;top:49px" width="24" height="25" viewBox="0 0 24 25"><rect x="1.500" y="1.500" width="12" height="11.500" fill="#fff" stroke="#4048a0" stroke-width="1.100"/>
<text x="7.500" y="12" font-family="Liberation Serif,serif" font-weight="bold" font-size="14" text-anchor="middle" fill="#000">i</text>
<path d="M8.500 17.500L15 11.500L22 17.500L15 23.500Z" fill="url(#gDia)" stroke="#182880" stroke-width="1.400"/></svg>
<svg style="left:403px;top:51px" width="24" height="21" viewBox="0 0 24 21"><rect x="1.500" y="1.500" width="21" height="18" fill="url(#gWin)" stroke="#3858d0" stroke-width="1.200"/>
<rect x="1.500" y="1.500" width="21" height="2.500" fill="#2848c8"/>
<path d="M8 8L16 15M16 8L8 15" stroke="#d86818" stroke-width="2.600"/>
<path d="M6 6L10.500 7L7 10.500ZM18 6L17 10.500L13.500 7ZM6 17L7 12.500L10.500 16ZM18 17L13.500 16L17 12.500Z" fill="#e88828"/>
<path d="M10 10L14 13.500M14 10L10 13.500" stroke="#a03808" stroke-width="1.400"/></svg>
<svg style="left:434px;top:51px" width="24" height="21" viewBox="0 0 24 21"><rect x="1" y="1" width="22" height="19" fill="#9a978e"/>
<path d="M2 2L12 12L22 2M2 19L9 11M22 19L15 11" stroke="#a8a59c" stroke-width="1.600" fill="none"/></svg>
<svg style="left:464px;top:50px" width="26" height="24" viewBox="0 0 26 24"><rect x="2" y="2.200" width="22" height="19" fill="url(#gWin)" stroke="#3858d0" stroke-width="1.200"/>
<rect x="2" y="2.200" width="22" height="2.500" fill="#2848c8"/>
<circle cx="13.500" cy="12" r="6.200" fill="#f4f8ff" stroke="#203050" stroke-width="1.300"/>
<path d="M18 17L23 22" stroke="#807040" stroke-width="2.200"/>
<circle cx="24" cy="2.700" r="1.500" fill="#c82020"/><circle cx="2" cy="21.200" r="1.500" fill="#c82020"/></svg>
<svg style="left:495px;top:49px" width="26" height="25" viewBox="0 0 26 25"><circle cx="10" cy="8.500" r="7.300" fill="#e4e8ec" stroke="#585850" stroke-width="1.600"/>
<path d="M10 3.500V9.500M7 6.500H13M7 12H13" stroke="#1838a0" stroke-width="1.800"/>
<path d="M15.500 14L23.500 22" stroke="#484038" stroke-width="2.400"/><path d="M15.500 14L22 20.500" stroke="#d0c8b0" stroke-width="0.800"/></svg>
<svg style="left:527px;top:51px" width="26" height="23" viewBox="0 0 26 23"><rect x="1.500" y="1.500" width="20" height="16" fill="url(#gWin2)" stroke="#9098d0" stroke-width="1.200"/>
<path d="M10 13C9.500 10 12 9 13 11L13.500 7.500C14.500 6 15.500 7 15.500 8L16.500 6C17.500 5 18.500 6 18.500 7L19.500 7C20.500 6.500 21 8 21 9L22.500 17L21.500 21H14Z" fill="#f0c880" stroke="#d0a050" stroke-width="0.700"/></svg>
<svg style="left:579px;top:49px" width="26" height="25" viewBox="0 0 26 25"><path d="M3 13C3 5 10 1.500 16 2C22 2.500 25 7 24 12C23 18 16 22 9 21C5 20.500 3 17 3 13Z" fill="url(#gPal)" stroke="#b08030" stroke-width="0.800"/>
<ellipse cx="10" cy="6.500" rx="2.200" ry="1.600" fill="#28a0e0"/><ellipse cx="15.500" cy="4.500" rx="2" ry="1.400" fill="#f8e828"/>
<ellipse cx="20.500" cy="8" rx="2" ry="1.500" fill="#e84820"/><ellipse cx="19.500" cy="14" rx="2.200" ry="1.700" fill="#38c838"/>
<path d="M2 22.500C1 20 3 18.500 5 19.500L9.500 14C8.500 11 11 9 13 10L11 13L13 14.500L15.500 12C17 14 15.500 17 12.500 16.500L8 21.500C7 23.500 4 24.500 2 22.500Z" fill="#f8e040" stroke="#a08010" stroke-width="0.700"/></svg>
<svg style="left:609px;top:49px" width="27" height="25" viewBox="0 0 27 25"><path d="M2.500 7L9.500 1L16.500 7L9.500 13Z" fill="url(#gDia)" stroke="#182880" stroke-width="1.400"/><path d="M4.500 7L9.500 2.800L14.500 7L9.500 11.200Z" fill="none" stroke="#fff" stroke-width="0.600"/>
<path d="M12.500 17L19 11L26 17L19 23.500Z" fill="url(#gDiaG)" stroke="#b0b8cc" stroke-width="1.200"/>
<path d="M2.500 14.500C4 17.500 7 18 9 17L8.500 15L12.500 18L8.500 20.500L8.800 18.800C6 19.500 3 18 2.500 14.500Z" fill="#f06020"/></svg>
<svg style="left:640px;top:49px" width="27" height="25" viewBox="0 0 27 25"><path d="M5 6.500L11 1L17 6.500L11 12Z" fill="url(#gDiaG)" stroke="#b0b8cc" stroke-width="1.200"/>
<path d="M10.500 17L17.500 11L24.500 17L17.500 23Z" fill="url(#gDia)" stroke="#182880" stroke-width="1.400"/><path d="M12.500 17L17.500 12.800L22.500 17L17.500 21.200Z" fill="none" stroke="#fff" stroke-width="0.600"/>
<path d="M1.500 11C3 14 6 15 8 14.500L7.500 12.500L11.500 15.500L7.500 18L7.800 16.300C5 16.500 2 15 1.500 11Z" fill="#f06020"/></svg>
<svg style="left:694px;top:53px" width="26" height="16" viewBox="0 0 26 16"><path d="M2 2.500H23" stroke="#182888" stroke-width="1.200"/><path d="M1.500 2.500L5 0.500V4.500ZM23.500 2.500L20 0.500V4.500Z" fill="#182888"/>
<path d="M1.500 0V5M23.500 0V5" stroke="#182888" stroke-width="0.800"/>
<rect x="1" y="8" width="23" height="6" fill="#f0d860" stroke="#c8a830" stroke-width="0.800"/>
<path d="M4 8V11M7 8V10M10 8V11M13 8V10M16 8V11M19 8V10M22 8V11" stroke="#fff8d0" stroke-width="1"/></svg>
<svg style="left:725px;top:49px" width="26" height="25" viewBox="0 0 26 25"><path d="M2.500 23.500V4L22 23.500Z" fill="#f0d0b0" stroke="#d08080" stroke-width="1.200"/>
<path d="M2.500 14C8 14 12 18 12 23.500" fill="none" stroke="#c84040" stroke-width="1.200"/>
<path d="M4.500 4L7.500 1L24.500 18L21.500 21Z" fill="#f0d860" stroke="#c0a030" stroke-width="0.900"/>
<path d="M8 6L9.500 4.500M11 9L12.500 7.500M14 12L15.500 10.500M17 15L18.500 13.500M20 18L21.500 16.500" stroke="#fff8d0" stroke-width="0.900"/></svg>
<svg style="left:784px;top:49px" width="24" height="22" viewBox="0 0 24 22"><rect x="1.500" y="10.500" width="18" height="9" fill="#fff" stroke="#707070" stroke-width="1"/>
<circle cx="10.500" cy="15" r="2.800" fill="#fff" stroke="#303030" stroke-width="1"/><g transform="translate(10 9) rotate(-28)"><rect x="0" y="-2.500" width="8" height="5" fill="#f0c890" stroke="#c09860" stroke-width="0.500"/><path d="M0 -2.500L-3 0L0 2.500Z" fill="#e8d0a0"/><rect x="8" y="-2.500" width="4" height="5" fill="#3040c8"/><rect x="7.500" y="-2.500" width="1.200" height="5" fill="#fff"/></g></svg>
<svg style="left:814px;top:49px" width="26" height="23" viewBox="0 0 26 23"><text x="10" y="21" font-family="Liberation Serif,serif" font-size="23" text-anchor="middle" fill="#000" stroke="#000" stroke-width="0.300">A</text><g transform="translate(12 8) rotate(-28)"><rect x="0" y="-2.500" width="8" height="5" fill="#f0c890" stroke="#c09860" stroke-width="0.500"/><path d="M0 -2.500L-3 0L0 2.500Z" fill="#e8d0a0"/><rect x="8" y="-2.500" width="4" height="5" fill="#3040c8"/><rect x="7.500" y="-2.500" width="1.200" height="5" fill="#fff"/></g></svg>
<svg style="left:844px;top:49px" width="27" height="25" viewBox="0 0 27 25"><rect x="7.500" y="10.500" width="12" height="13" fill="none" stroke="#404040" stroke-width="1"/>
<path d="M5 17.500H22" stroke="#d02020" stroke-width="1" stroke-dasharray="1.500 1"/>
<path d="M5 17.500V10M22 17.500V10" stroke="#d02020" stroke-width="1.200"/><path d="M3 11.500L5 7.500L7 11.500ZM20 11.500L22 7.500L24 11.500Z" fill="#d02020"/><g transform="translate(11 7) rotate(-28)"><rect x="0" y="-2.500" width="8" height="5" fill="#f0c890" stroke="#c09860" stroke-width="0.500"/><path d="M0 -2.500L-3 0L0 2.500Z" fill="#e8d0a0"/><rect x="8" y="-2.500" width="4" height="5" fill="#3040c8"/><rect x="7.500" y="-2.500" width="1.200" height="5" fill="#fff"/></g></svg>
<svg style="left:877px;top:53px" width="23" height="19" viewBox="0 0 23 19"><rect x="1.500" y="1.500" width="19" height="9" fill="#fff" stroke="#707070" stroke-width="1"/>
<circle cx="11" cy="6" r="2.800" fill="#fff" stroke="#303030" stroke-width="1"/>
<path d="M3.500 13.500H18.500M3.500 16H18.500" stroke="#d84040" stroke-width="1.200"/></svg>
<svg style="left:929px;top:49px" width="26" height="25" viewBox="0 0 26 25"><text x="1" y="11.800" font-family="Liberation Sans,sans-serif" font-weight="bold" font-size="12.500" fill="#101070">A</text>
<text x="0" y="0" transform="translate(5.500 21.300) skewX(-12)" font-family="Liberation Serif,serif" font-weight="bold" font-style="italic" font-size="23" fill="#1020a0">A</text>
<path d="M3.500 22.800H23.500" stroke="#1020a0" stroke-width="1.200"/></svg>
<svg style="left:959px;top:49px" width="24" height="25" viewBox="0 0 24 25"><path d="M11 5L15 1.500L20 5.500L17.500 8L21 11L17 14.500L10 9Z" fill="#f4f4ff" stroke="#9098d8" stroke-width="0.900"/>
<path d="M3 10C5 7 7 5.500 9 5" stroke="#101010" stroke-width="2.200" fill="none"/><path d="M3.500 13L9 7" stroke="#30a040" stroke-width="1.200"/>
<path d="M6 21.500C5 19.500 7 18 8.500 19L13 14.500C12 12 14 10 16.500 11L14.500 13.500L16 15L18.500 13C19.500 15 18 17.500 15.500 17L11 21.500C10 23.500 7 23.500 6 21.500Z" fill="#f8e040" stroke="#b09010" stroke-width="0.800"/></svg>
<svg style="left:990px;top:49px" width="26" height="25" viewBox="0 0 26 25"><path d="M1.500 3.500H8V12.500H16V23.500H1.500Z" fill="#fff"/>
<rect x="3.500" y="17.500" width="7" height="4" fill="#fff" stroke="#303040" stroke-width="0.900"/>
<path d="M2 2.500H24.500M23.500 1V17.500" stroke="#e07060" stroke-width="0.900" fill="none"/>
<path d="M16 12.500H24.500M16 17.500H24.500" stroke="#b04040" stroke-width="0.900" fill="none"/>
<path d="M8.500 1.500V12.500H16" stroke="#702020" stroke-width="1.200" fill="none"/>
<path d="M11 4L14.500 9" stroke="#d89030" stroke-width="2"/>
<circle cx="16" cy="12.500" r="1.400" fill="#101010"/><path d="M16 12.500V23.500" stroke="#101010" stroke-width="1"/></svg>
<svg style="left:1022px;top:50px" width="26" height="24" viewBox="0 0 26 24"><path d="M8 3.500H12L19 12" fill="none" stroke="#d02020" stroke-width="1.100"/><path d="M21 14.500L16 12.500L19.500 9.500Z" fill="#d02020"/>
<path d="M2 20.500C1 18.500 3 17 4.500 18L8.500 13.500C7.500 11 9.500 8.500 12 9.500L10 12L12 14L14.500 12C15.500 14.500 13.500 16.500 11 16L7 20.500C6 22.500 3 22.500 2 20.500Z" fill="#f8e040" stroke="#b09010" stroke-width="0.800"/></svg>
<svg style="left:1051px;top:52px" width="27" height="17" viewBox="0 0 27 17"><path d="M1 4L6.500 8.500L1 13Z" fill="#c82020"/>
<path d="M8 4.500L16 1.500L24 4.500V11.500L16 15L8 11.500Z" fill="url(#gCubeG)" stroke="#8898a0" stroke-width="0.800"/>
<path d="M8 4.500L16 7.500L24 4.500M16 7.500V15" fill="none" stroke="#a0b0b8" stroke-width="0.800"/><path d="M8 4.500L16 7.500V15L8 11.500Z" fill="#d4e0e4" opacity="0.800"/></svg>
<svg style="left:1082px;top:51px" width="27" height="19" viewBox="0 0 27 19"><path d="M1 5L6.500 9.500L1 14Z" fill="#c82020"/>
<path d="M8 4.500L17 1.500L25 5V12.500L17 16.500L8 13Z" fill="url(#gYel)" stroke="#d0a010" stroke-width="0.800"/>
<path d="M8 4.500L16 7.500V16L8 13Z" fill="#fff8b0" opacity="0.900"/><path d="M16 7.500L25 5V12.500L17 16.500Z" fill="#e8b008" opacity="0.700"/></svg>
<svg style="left:1114px;top:51px" width="27" height="22" viewBox="0 0 27 22"><rect x="1.500" y="5.500" width="23" height="13" fill="url(#hatchB)" stroke="#c03030" stroke-width="0" />
<path d="M1.500 18.500H25" stroke="#b02828" stroke-width="1"/>
<rect x="8" y="1.500" width="9" height="3.500" fill="#fff" stroke="#707070" stroke-width="0.900"/>
<rect x="10.500" y="5" width="4" height="15" fill="#fff" stroke="#b03030" stroke-width="0.900"/></svg>
<!-- toolbar row 2 icons -->
<svg style="left:11px;top:83px" width="25" height="25" viewBox="0 0 25 25"><rect x="5.500" y="9.500" width="17" height="12.500" fill="url(#gWin2)" stroke="#8890d0" stroke-width="1.100"/>
<path d="M14 17H21M14 19.500H21" stroke="#b0b0c8" stroke-width="1"/><path d="M4.3 4.5l1 -3.200 1 3.200 3.200 1-3.200 1-1 3.200-1-3.200-3.200-1Z" fill="#e8f040" stroke="#c8d828" stroke-width="0.500"/></svg>
<svg style="left:47px;top:82px" width="27" height="26" viewBox="0 0 27 26"><rect x="5.500" y="10.500" width="19" height="13" fill="url(#gWin2)" stroke="#9098d0" stroke-width="1.100"/>
<path d="M15 18H22.500M15 20.500H22.500" stroke="#b0b0c8" stroke-width="1"/>
<circle cx="16.500" cy="8" r="3.300" fill="#e89048"/>
<rect x="1.500" y="1.500" width="11.500" height="11" fill="#fff" stroke="#606880" stroke-width="0.900"/>
<path d="M3.500 4.500L7 3L11 4.500V9L7.500 11L3.500 9Z" fill="#2048c0"/><path d="M6 5L9 4V8L6 9Z" fill="#5080e8"/></svg>
<svg style="left:91px;top:82px" width="26" height="26" viewBox="0 0 26 26"><path d="M1.400 14.200L13.900 1.700L17.900 6.100L5.800 18.300Z" fill="#ffecec" stroke="#d03030" stroke-width="1.100"/>
<path d="M5.500 10L10 14.300M9.600 6L14 10.200" stroke="#d03030" stroke-width="1"/>
<path d="M5.800 18.300L9 22M17.900 6.100L22 10" stroke="#d87070" stroke-width="0.700"/>
<path d="M11.500 17L16 12.500H23.500V24.500H11.500Z" fill="#fff" stroke="#808080" stroke-width="1"/></svg>
<svg style="left:122px;top:82px" width="26" height="26" viewBox="0 0 26 26"><rect x="1.500" y="15.500" width="8.500" height="8" fill="#fff" stroke="#808080" stroke-width="0.900"/>
<path d="M8.500 16.500L16 9" stroke="#d03030" stroke-width="1"/>
<circle cx="8.600" cy="16.800" r="2.400" fill="#f8e0e0" stroke="#d03030" stroke-width="1"/><path d="M8 16L10 18" stroke="#d03030" stroke-width="0.900"/>
<circle cx="18" cy="7.600" r="5.500" fill="#fff" stroke="#c82828" stroke-width="1.100"/>
<path d="M13 6.500C15 5 16 6 16.500 8C17 10 18.500 9.500 19 8.500L20.500 8V12.500" fill="none" stroke="#303030" stroke-width="1"/></svg>
<svg style="left:158px;top:83px" width="27" height="25" viewBox="0 0 27 25"><circle cx="13" cy="12.100" r="7.800" fill="#fff" stroke="#202020" stroke-width="1"/>
<rect x="10.800" y="9.900" width="4.400" height="4.400" rx="1" fill="none" stroke="#202020" stroke-width="1"/>
<path d="M3.500 12H22.500" stroke="#d02020" stroke-width="1.100"/>
<path d="M3.500 12V6M22.500 12V6" stroke="#c01828" stroke-width="1.200"/><path d="M1.500 7L3.500 2.500L5.500 7ZM20.500 7L22.500 2.500L24.500 7Z" fill="#a81020"/></svg>
<svg style="left:189px;top:82px" width="26" height="25" viewBox="0 0 26 25"><circle cx="13" cy="12.800" r="7.800" fill="#fff" stroke="#202020" stroke-width="1"/>
<path d="M3.500 13V7.500" stroke="#c01828" stroke-width="1.200"/><path d="M1.500 8.500L3.500 4L5.500 8.500Z" fill="#b01020"/>
<path d="M3.500 13H6" stroke="#c01828" stroke-width="1.100"/>
<path d="M8.500 13H13L17 8.500" fill="none" stroke="#181818" stroke-width="1.300"/>
<path d="M17 8.500L19.500 5.500" stroke="#c01828" stroke-width="1.300"/><path d="M15.800 2.500L18.500 1.200L21.500 2.800L21.200 7.500L19.500 4.800Z" fill="#b81020"/>
<circle cx="8.500" cy="13" r="1.300" fill="#101010"/><circle cx="13" cy="13" r="1.300" fill="#101010"/><circle cx="17" cy="8.700" r="1.300" fill="#101010"/></svg>
<svg style="left:219px;top:83px" width="26" height="29" viewBox="0 0 26 29"><circle cx="13.800" cy="11.800" r="7.800" fill="#fff" stroke="#202020" stroke-width="1"/>
<path d="M4.300 12V6.500" stroke="#c01828" stroke-width="1.200"/><path d="M2.300 7.500L4.300 3L6.300 7.500Z" fill="#b01020"/>
<path d="M4.300 12H8" stroke="#c01828" stroke-width="1.100"/>
<path d="M13.800 12V28" fill="none" stroke="#c01828" stroke-width="1.100"/>
<path d="M9.500 12H13.800" stroke="#181818" stroke-width="1.300"/>
<circle cx="9.500" cy="12" r="1.300" fill="#101010"/><circle cx="13.800" cy="12" r="1.300" fill="#101010"/></svg>
<svg style="left:253px;top:84px" width="24" height="23" viewBox="0 0 24 23"><rect x="2.300" y="1.800" width="19" height="9" fill="#fff" stroke="#909090" stroke-width="1.300"/>
<circle cx="11.800" cy="6" r="2.900" fill="#fff" stroke="#303030" stroke-width="0.900"/>
<rect x="2.300" y="14.300" width="19" height="6.700" fill="#fff" stroke="#9090e0" stroke-width="1.300"/>
<path d="M8.500 14.500V21M14.800 14.500V21" stroke="#9090e0" stroke-width="1.200"/>
<path d="M5 10.500l0.800 2.500 2.500 0.800-2.500 0.800-0.800 2.500-0.800-2.500-2.500-0.800 2.500-0.800Z" fill="#e8f040" stroke="#c8d828" stroke-width="0.500"/></svg>
<svg style="left:282px;top:84px" width="26" height="20" viewBox="0 0 26 20"><rect x="1.500" y="1.500" width="23.500" height="17" fill="#fff" stroke="#303030" stroke-width="1.200"/>
<path d="M1 18.300H25.500" stroke="#303030" stroke-width="1.600"/>
<path d="M8.500 1.500C8.500 9 13 14.500 19 14.500C21.500 14.500 23.500 13.500 25 12V1.500Z" fill="url(#hatchK)" stroke="#e07080" stroke-width="1"/>
<path d="M13.500 1.500C13.500 5.500 15.500 8 18 8C20.500 8 22 5.500 22 1.500Z" fill="#fff" stroke="#303050" stroke-width="1"/></svg>
<svg style="left:319px;top:84px" width="26" height="22" viewBox="0 0 26 22"><g fill="#fff" stroke="#383838" stroke-width="1">
<rect x="2.500" y="7" width="4" height="7.500"/>
<rect x="6.500" y="2.500" width="3.500" height="17"/>
<path d="M10 4.500H13.500C12.500 6.500 15 8 14 10.500C13 13 15.500 15 14 17H10Z"/>
<path d="M16.500 4.500H21.500V17H16.500C18 15 15.500 13 16.500 10.500C17.500 8 15 6.500 16.500 4.500Z"/>
<path d="M21.500 6H23C24 9 24 13 23 15.500H21.500Z"/></g></svg>
<svg style="left:356px;top:82px" width="27" height="26" viewBox="0 0 27 26"><rect x="4.800" y="5.500" width="19.200" height="8.800" fill="#fff" stroke="#707070" stroke-width="1.100"/>
<circle cx="14.600" cy="10" r="2.900" fill="#fff" stroke="#303060" stroke-width="0.900"/>
<path d="M10 3.500C7.500 0.500 3 1.500 2 5.500C1 9.500 5 12.500 9 10.500" fill="none" stroke="#303090" stroke-width="2.200"/><path d="M7.500 7.500L12.500 9L9 13.500Z" fill="#303090"/>
<rect x="4.800" y="17.500" width="19.200" height="6" fill="#fff" stroke="#707070" stroke-width="1.100"/><path d="M11.300 17.500V23.500M17.700 17.500V23.500" stroke="#707070" stroke-width="1"/></svg>
<svg style="left:388px;top:83px" width="25" height="24" viewBox="0 0 25 24"><g stroke="#707010" stroke-width="0.600" fill="#a8b020"><path d="M7 1.500L9.500 4H4.500ZM7 13L9.500 10.500H4.500ZM1 7.500L3.500 5V10ZM13 7.500L10.500 5V10Z"/><rect x="5.500" y="6" width="3" height="3"/></g>
<rect x="2.500" y="10.700" width="19" height="9.300" fill="#fff" stroke="#808080" stroke-width="1.100"/>
<circle cx="12" cy="15.300" r="2.900" fill="#fff" stroke="#303030" stroke-width="0.900"/></svg>
<svg style="left:441px;top:83px" width="25" height="24" viewBox="0 0 25 24"><path d="M1.500 1.500V10.500M22.500 1.500V10.500M1.500 5H9M16 5H22.500" stroke="#101010" stroke-width="1"/>
<path d="M2 5L6 3.300V6.700ZM22 5L18 3.300V6.700Z" fill="#101010"/>
<path d="M13.500 3L8 11.500H11.500L6 21L3 22L15 10H11.500L17 3Z" fill="#f8e838" stroke="#a89010" stroke-width="0.600"/></svg>
<svg style="left:485px;top:84px" width="26" height="25" viewBox="0 0 26 25"><path d="M3.500 3.500C3.500 1.500 8.500 1.500 9.500 1.500V20.500C8.500 20.500 3.500 20.500 3.500 18.500Z" fill="url(#gCyl)" stroke="#303840" stroke-width="0.900"/>
<ellipse cx="3.500" cy="15" rx="2.300" ry="4.500" fill="#a0b0c0" stroke="#303840" stroke-width="0.900"/>
<path d="M13.500 2V20M10 1.500H17M10 20.500H17" stroke="#d02020" stroke-width="1.100"/><path d="M11.500 5.500L13.500 1.500L15.500 5.500ZM11.500 16.500L13.500 20.500L15.500 16.500Z" fill="#d02020"/>
<circle cx="20.500" cy="10.500" r="2.500" fill="none" stroke="#d02020" stroke-width="1"/><path d="M18.500 13.500L22.500 7.500" stroke="#d02020" stroke-width="0.900"/></svg>
<svg style="left:515px;top:83px" width="25" height="25" viewBox="0 0 25 25"><circle cx="12" cy="14" r="6.300" fill="#d4d0c8" stroke="#101010" stroke-width="1.300"/>
<path d="M1.500 4H10" stroke="#d02020" stroke-width="1"/><path d="M1.500 4L6.500 9" stroke="#d02020" stroke-width="1.100"/><path d="M8 10.500L3.500 8.500L6.500 6Z" fill="#d02020"/>
<path d="M22.500 23.500L18.500 19.500" stroke="#d02020" stroke-width="1.100"/><path d="M16.500 17.500L21 19L18.500 22Z" fill="#d02020"/>
<circle cx="17.500" cy="4" r="2.400" fill="none" stroke="#d02020" stroke-width="1"/><path d="M15.500 7L19.500 1" stroke="#d02020" stroke-width="0.900"/></svg>
<svg style="left:545px;top:83px" width="27" height="25" viewBox="0 0 27 25"><path d="M2.500 14.500H9V18.500H16V14.500H23.500V22.500H2.500Z" fill="#fff" stroke="#a0a0a0" stroke-width="0.700"/>
<path d="M2 2.500H24M2.500 1.500V23M10.500 1.500V18M17.500 1.500V18M23.500 1.500V23" fill="none" stroke="#d86868" stroke-width="1"/></svg>
<svg style="left:588px;top:83px" width="27" height="24" viewBox="0 0 27 24"><path d="M1.500 9H17" stroke="#807880" stroke-width="1.300"/><path d="M13 1V12" stroke="#807880" stroke-width="1.300"/>
<path d="M13 12V19" stroke="#d03030" stroke-width="1.100"/><rect x="12" y="19" width="2.200" height="3.500" fill="none" stroke="#d03030" stroke-width="0.900"/>
<path d="M17 9H20" stroke="#d03030" stroke-width="1.100"/><ellipse cx="22" cy="9" rx="2" ry="1.300" fill="none" stroke="#d03030" stroke-width="0.900"/></svg>
<svg style="left:641px;top:82px" width="27" height="26" viewBox="0 0 27 26"><rect x="2" y="6.500" width="18" height="17" fill="#fff" stroke="#505880" stroke-width="1.300"/>
<text x="11" y="22" font-family="Liberation Serif,serif" font-size="19" text-anchor="middle" fill="#000">A</text>
<path d="M14.500 12L21.500 3.500L24 5.500L17 14L14 15Z" fill="#f0d838" stroke="#a08818" stroke-width="0.500"/><path d="M21.500 3.500L22.800 2L25.300 4L24 5.500Z" fill="#e05828"/><path d="M14 15L14.500 12.500L16.500 14Z" fill="#101010"/></svg>
<svg style="left:672px;top:83px" width="26" height="25" viewBox="0 0 26 25"><path d="M7 14.500H3.500V20" fill="none" stroke="#101010" stroke-width="1.100"/><path d="M1.500 18.500L3.500 23L5.500 18.500Z" fill="#101010"/>
<rect x="7" y="12.500" width="16.500" height="4" fill="#fff" stroke="#101010" stroke-width="1"/><path d="M10.500 12.500V16.500" stroke="#c0c0c0" stroke-width="0.800"/>
<path d="M10.500 10.500L17.500 2L20 4L13 12.500L10 13.500Z" fill="#f0d838" stroke="#a08818" stroke-width="0.500"/><path d="M17.500 2L18.800 0.500L21.300 2.500L20 4Z" fill="#e05828"/><path d="M10 13.500L10.500 11L12.500 12.500Z" fill="#101010"/></svg>
<svg style="left:703px;top:83px" width="26" height="25" viewBox="0 0 26 25"><circle cx="9.500" cy="7.500" r="3.800" fill="none" stroke="#d02020" stroke-width="1.300"/>
<path d="M9.500 0.500V14M2 7.500H17" stroke="#181010" stroke-width="1.100"/>
<rect x="11.500" y="14.500" width="9.500" height="8" fill="#e4e0d8" stroke="#503030" stroke-width="1.100"/>
<path d="M9 18.500H23.500" stroke="#d06060" stroke-width="0.800" stroke-dasharray="2 1"/></svg>
<svg style="left:736px;top:83px" width="25" height="24" viewBox="0 0 25 24"><path d="M13.500 10.500L3.500 20" stroke="#101010" stroke-width="1.100"/><path d="M2 21.500L3.500 16.500L7 20Z" fill="#101010"/>
<circle cx="16" cy="7" r="6" fill="#fff" stroke="#202060" stroke-width="1"/>
<text x="16" y="11" font-family="Liberation Sans,sans-serif" font-weight="bold" font-size="10.500" text-anchor="middle" fill="#101070">7</text></svg>
<svg style="left:767px;top:83px" width="26" height="24" viewBox="0 0 26 24"><path d="M5.500 19V12H10.500V5.500H19.500V19Z" fill="#fff" stroke="#c07070" stroke-width="1"/>
<path d="M10.500 1V5.500M19.500 1V23M10 2.500H20M1 12H5.500M1 19H23M2.500 11V21M5.500 19V23M4.500 21.500H20.500M22 4V20M19.500 5.500H23.500" fill="none" stroke="#d48888" stroke-width="0.800"/></svg>
<svg style="left:797px;top:82px" width="25" height="24" viewBox="0 0 25 24"><path d="M6 10L14 15L22 10V21.500L14 16.500L6 21.500Z" fill="#f8b838" stroke="#d89010" stroke-width="0.800"/><path d="M3.8 6.3l1 -3.200 1 3.200 3.200 1-3.200 1-1 3.200-1-3.200-3.200-1Z" fill="#e8f040" stroke="#c8d828" stroke-width="0.500"/></svg>
<svg style="left:828px;top:85px" width="27" height="20" viewBox="0 0 27 20"><rect x="1.500" y="1.500" width="21.500" height="17" fill="url(#gPic)" stroke="#202020" stroke-width="1.400"/>
<circle cx="17.800" cy="5.500" r="2.900" fill="#f8e030"/>
<path d="M2 13C4 8.500 7.500 8 10.500 11C13 8.500 16 9 18 12C20 11 22 11.500 22.500 13V18H2Z" fill="#e0e0e0" stroke="#f8f8f8" stroke-width="0.800"/>
<path d="M6 17L10 12M11 17L15 12.500M16.500 17L19.500 13.500" stroke="#909090" stroke-width="0.800"/></svg>
<svg style="left:860px;top:84px" width="23" height="20" viewBox="0 0 23 20"><rect x="1.500" y="1.500" width="19.500" height="16.500" fill="url(#hatchB)" stroke="#5868a8" stroke-width="1.100"/></svg>
<svg style="left:912px;top:82px" width="26" height="26" viewBox="0 0 26 26"><path d="M6.500 3.500L24 9V24.500L6.500 17.500Z" fill="#fff" stroke="#505060" stroke-width="0.900"/>
<path d="M6.500 3.500L24 9" stroke="#a070d8" stroke-width="1.700"/>
<path d="M11 5V19.300M15.300 6.300V21M19.700 7.700V22.800M6.500 7L24 13M6.500 10.500L24 17M6.500 14L24 20.800" stroke="#505060" stroke-width="0.800"/><path d="M3.8 5.3l1 -3.200 1 3.200 3.200 1-3.200 1-1 3.200-1-3.200-3.200-1Z" fill="#e8f040" stroke="#c8d828" stroke-width="0.500"/></svg>
<svg style="left:943px;top:82px" width="26" height="25" viewBox="0 0 26 25"><rect x="4.800" y="5" width="18.700" height="18" fill="#fff" stroke="#384068" stroke-width="1"/>
<rect x="4.800" y="17.500" width="18.700" height="5.500" fill="#88b0e8"/>
<path d="M4.800 8H23.500M4.800 11H23.500M4.800 14H23.500M4.800 17.500H23.500M4.800 20.300H23.500M9.500 5V17.500M14.300 5V23M19 5V17.500" stroke="#384068" stroke-width="0.800"/>
<rect x="4.800" y="5" width="18.700" height="18" fill="none" stroke="#384068" stroke-width="1"/><path d="M3.3 5.3l1 -3.200 1 3.200 3.200 1-3.200 1-1 3.200-1-3.200-3.200-1Z" fill="#e8f040" stroke="#c8d828" stroke-width="0.500"/></svg>
<svg style="left:979px;top:82px" width="27" height="26" viewBox="0 0 27 26"><path d="M20.500 1L14 9.500H17.500L13 15.500L11 17L22.500 7.500H19L24.500 1Z" fill="#f8e838" stroke="#a89010" stroke-width="0.600"/>
<circle cx="7.500" cy="17.500" r="6" fill="#fff" stroke="#a03020" stroke-width="1.100"/>
<text x="7.500" y="21.500" font-family="Liberation Sans,sans-serif" font-weight="bold" font-size="10.500" text-anchor="middle" fill="#101040">7</text></svg>
<!-- taskbar contents -->
<div class="task" style="left:2px;width:47px"></div>
<svg style="left:4px;top:746px" width="17" height="17" viewBox="0 0 17 17">
 <path d="M1.500 3.500C3.500 2 5.500 2 7.500 3L6 8.500C4 7.500 2 7.500 0.500 9Z" fill="#e86020"/>
 <path d="M8.500 3.500C10.500 4.500 12.500 4.500 14.500 3L13 8.500C11 10 9 10 7 9Z" fill="#58b028"/>
 <path d="M0.300 10C2 8.500 4 8.500 5.800 9.500L4.500 15C2.500 14 0.500 14 -1 15.500Z" fill="#3868d8"/>
 <path d="M6.800 10C8.800 11 10.800 11 12.800 9.500L11.500 15C9.500 16.500 7.500 16.500 5.500 15.500Z" fill="#e8c020"/>
</svg>
<div class="t" style="left:22px;top:749px;font-size:12px">开始</div>
<!-- quick launch -->
<svg style="left:58px;top:745px" width="64" height="20" viewBox="58 745 64 20">
 <path d="M62 747.500L70.500 746.500V757L62 757.500Z" fill="#58a0e8" stroke="#3070c0" stroke-width="0.600"/><path d="M63 748.500L69.500 747.500V752L63 753Z" fill="#a8d0f8"/>
 <path d="M63 758C65 756.500 68 756.500 70 758.500C69 761.500 64 761.500 63 758Z" fill="#c8c0e8" stroke="#7878b0" stroke-width="0.500"/>
 <rect x="80.500" y="746.500" width="13.500" height="14.500" rx="1.500" fill="#2070c8" stroke="#104890" stroke-width="0.800"/><rect x="82.500" y="748.500" width="9.500" height="10.500" fill="#f0f4fc"/>
 <path d="M90 751C88 749.500 85 750 84.500 753C84 756 87 758 90 756.500" fill="none" stroke="#2070c8" stroke-width="1.600"/><path d="M86 754.500L89.500 752.500" stroke="#101010" stroke-width="1.100"/><path d="M93 750L96 752L93.500 753.500Z" fill="#d07020"/>
 <circle cx="111" cy="755" r="7.300" fill="#38b838" stroke="#90e090" stroke-width="1"/><path d="M106.500 755.500H115.500C115.500 750.500 107 750 106.500 755.500C106.500 760 113 760.500 115 758" fill="none" stroke="#f0fff0" stroke-width="2"/>
</svg>
<div class="t" style="left:130px;top:743px;font-size:15px;font-weight:bold">»</div>
<!-- task buttons -->
<div class="task" style="left:143px;width:160px"></div>
<svg style="left:147px;top:747px" width="16" height="16" viewBox="0 0 16 16">
 <rect x="0.500" y="0.500" width="14.500" height="14.500" fill="#188868" stroke="#e8f8f0" stroke-width="1"/>
 <path d="M3 9L5.500 2.500L8 9M2 10.500H9.500" fill="none" stroke="#e8fff8" stroke-width="1.300"/>
 <path d="M11.500 1V14.500M1 11.500H14.500" stroke="#b8f0e0" stroke-width="0.900"/><rect x="9.500" y="9.500" width="4" height="4" fill="#188868" stroke="#fff" stroke-width="1"/>
</svg>
<div class="t" id="tk1" style="left:167px;top:750px;font-size:11px;letter-spacing:0.050px">AutoCAD 2007 - [E:\WO...</div>
<div class="task" style="left:306px;width:160px"></div>
<svg style="left:310px;top:746px" width="17" height="18" viewBox="0 0 17 18">
 <circle cx="8.500" cy="9" r="7.300" fill="#38b838" stroke="#90e090" stroke-width="1"/><path d="M4 9.500H13C13 4.500 4.500 4 4 9.500C4 14 10.500 14.500 12.500 12" fill="none" stroke="#f0fff0" stroke-width="2"/>
</svg>
<div class="t" id="tk2" style="left:330px;top:749px;font-size:12px">三維网技术论坛 三維|c...</div>
<div class="task" style="left:469px;width:160px"></div>
<svg style="left:472px;top:747px" width="18" height="16" viewBox="0 0 18 16">
 <path d="M1.500 3.500C1.500 2.500 2 2 3 2H6.500L8 3.500H14.500C15.500 3.500 16 4 16 5V12.500C16 13.500 15.500 14 14.500 14H3C2 14 1.500 13.500 1.500 12.500Z" fill="#f0d050" stroke="#907010" stroke-width="1"/>
 <path d="M2.500 6H15V12.500H2.500Z" fill="#f8e890"/>
</svg>
<div class="t" id="tk3" style="left:493px;top:750px;font-size:11px;letter-spacing:0.150px">E:\stand parts\pattern</div>
<div class="abs" style="left:632px;top:744px;width:159px;height:22px;background:#ecebe6;border-top:1px solid #404040;border-left:1px solid #404040;border-right:1px solid #fff;border-bottom:1px solid #fff;box-shadow:inset 1px 1px 0 #808080"></div>
<svg style="left:636px;top:746px" width="18" height="18" viewBox="0 0 26 26">
 <circle cx="12.500" cy="13" r="9.800" fill="url(#gGlobe)"/>
 <path d="M9 10C13 9 17 12 18 17C15 17 11 14 9 10Z" fill="#a0f0f8" opacity="0.800"/>
 <ellipse cx="13" cy="14" rx="13" ry="4" transform="rotate(-33 13 14)" fill="none" stroke="#f0c040" stroke-width="2.400"/>
 <path d="M4 3.500L14.500 1.500L11 12Z" fill="#d82020"/>
</svg>
<div class="t" id="tk4" style="left:657px;top:751px;font-size:11px;letter-spacing:0.020px">NX 4 - Drafting - [zhi jia ...</div>
<!-- desktop toolbar -->
<div class="t" style="left:1060px;top:749px;font-size:12px">我的电脑</div>
<svg style="left:1115px;top:749px" width="19" height="12" viewBox="0 0 19 12">
 <path d="M1 5L6 1.500H15L18 5V8.500L13 11H4L1 8.500Z" fill="#c8c8c8" stroke="#808080" stroke-width="0.800"/><path d="M1 5H18L13 8H4Z" fill="#f0f0f0"/><rect x="12" y="8.500" width="2.500" height="1" fill="#30c030"/>
</svg>
<div class="t" style="left:1135px;top:749px;font-size:12px">本地磁盘 (C:)</div>
<div class="t" style="left:1230px;top:743px;font-size:15px;font-weight:bold">»</div>
<!-- tray -->
<div class="abs" style="left:1242px;top:744px;width:116px;height:22px;border-top:1px solid #808080;border-left:1px solid #808080;border-right:1px solid #fff;border-bottom:1px solid #fff"></div>
<svg style="left:1244px;top:746px" width="80" height="18" viewBox="1244 746 80 18">
 <circle cx="1254" cy="753" r="4" fill="#202020"/><rect x="1247" y="759" width="12" height="2.500" fill="#e8a030"/>
 <rect x="1267" y="750" width="8" height="7" fill="#202020"/><rect x="1266" y="758" width="10" height="2" fill="#c02020"/>
 <circle cx="1289" cy="754" r="6" fill="#404850"/><path d="M1285 757C1288 760 1292 760 1294 757" stroke="#5080e0" stroke-width="1.500" fill="none"/>
 <path d="M1300 750L1306 747L1312 750V757L1306 762L1300 757Z" fill="#30a030"/><path d="M1300 750L1306 747L1312 750L1306 752Z" fill="#e09030"/><path d="M1303 757L1306 760L1309 757Z" fill="#103010"/>
</svg>
<div class="t" style="left:1322px;top:750px;font-size:11px">10:15</div>
<!-- watermark -->
<svg id="wm" style="left:1136px;top:742px" width="212" height="26" viewBox="1136 742 212 26">
 <g font-weight="bold" fill="#fff" stroke="#f04040" stroke-width="1.500" paint-order="stroke" stroke-linejoin="round">
  <text x="1140" y="761" font-family="'Liberation Sans','Noto Sans CJK SC',sans-serif" font-size="15" textLength="54" lengthAdjust="spacingAndGlyphs">三维网</text>
  <text x="1194" y="760" font-family="'Liberation Sans',sans-serif" font-size="14.500" textLength="147" lengthAdjust="spacingAndGlyphs">www.3dportal.cn</text>
 </g>
</svg>
</body>
</html>
